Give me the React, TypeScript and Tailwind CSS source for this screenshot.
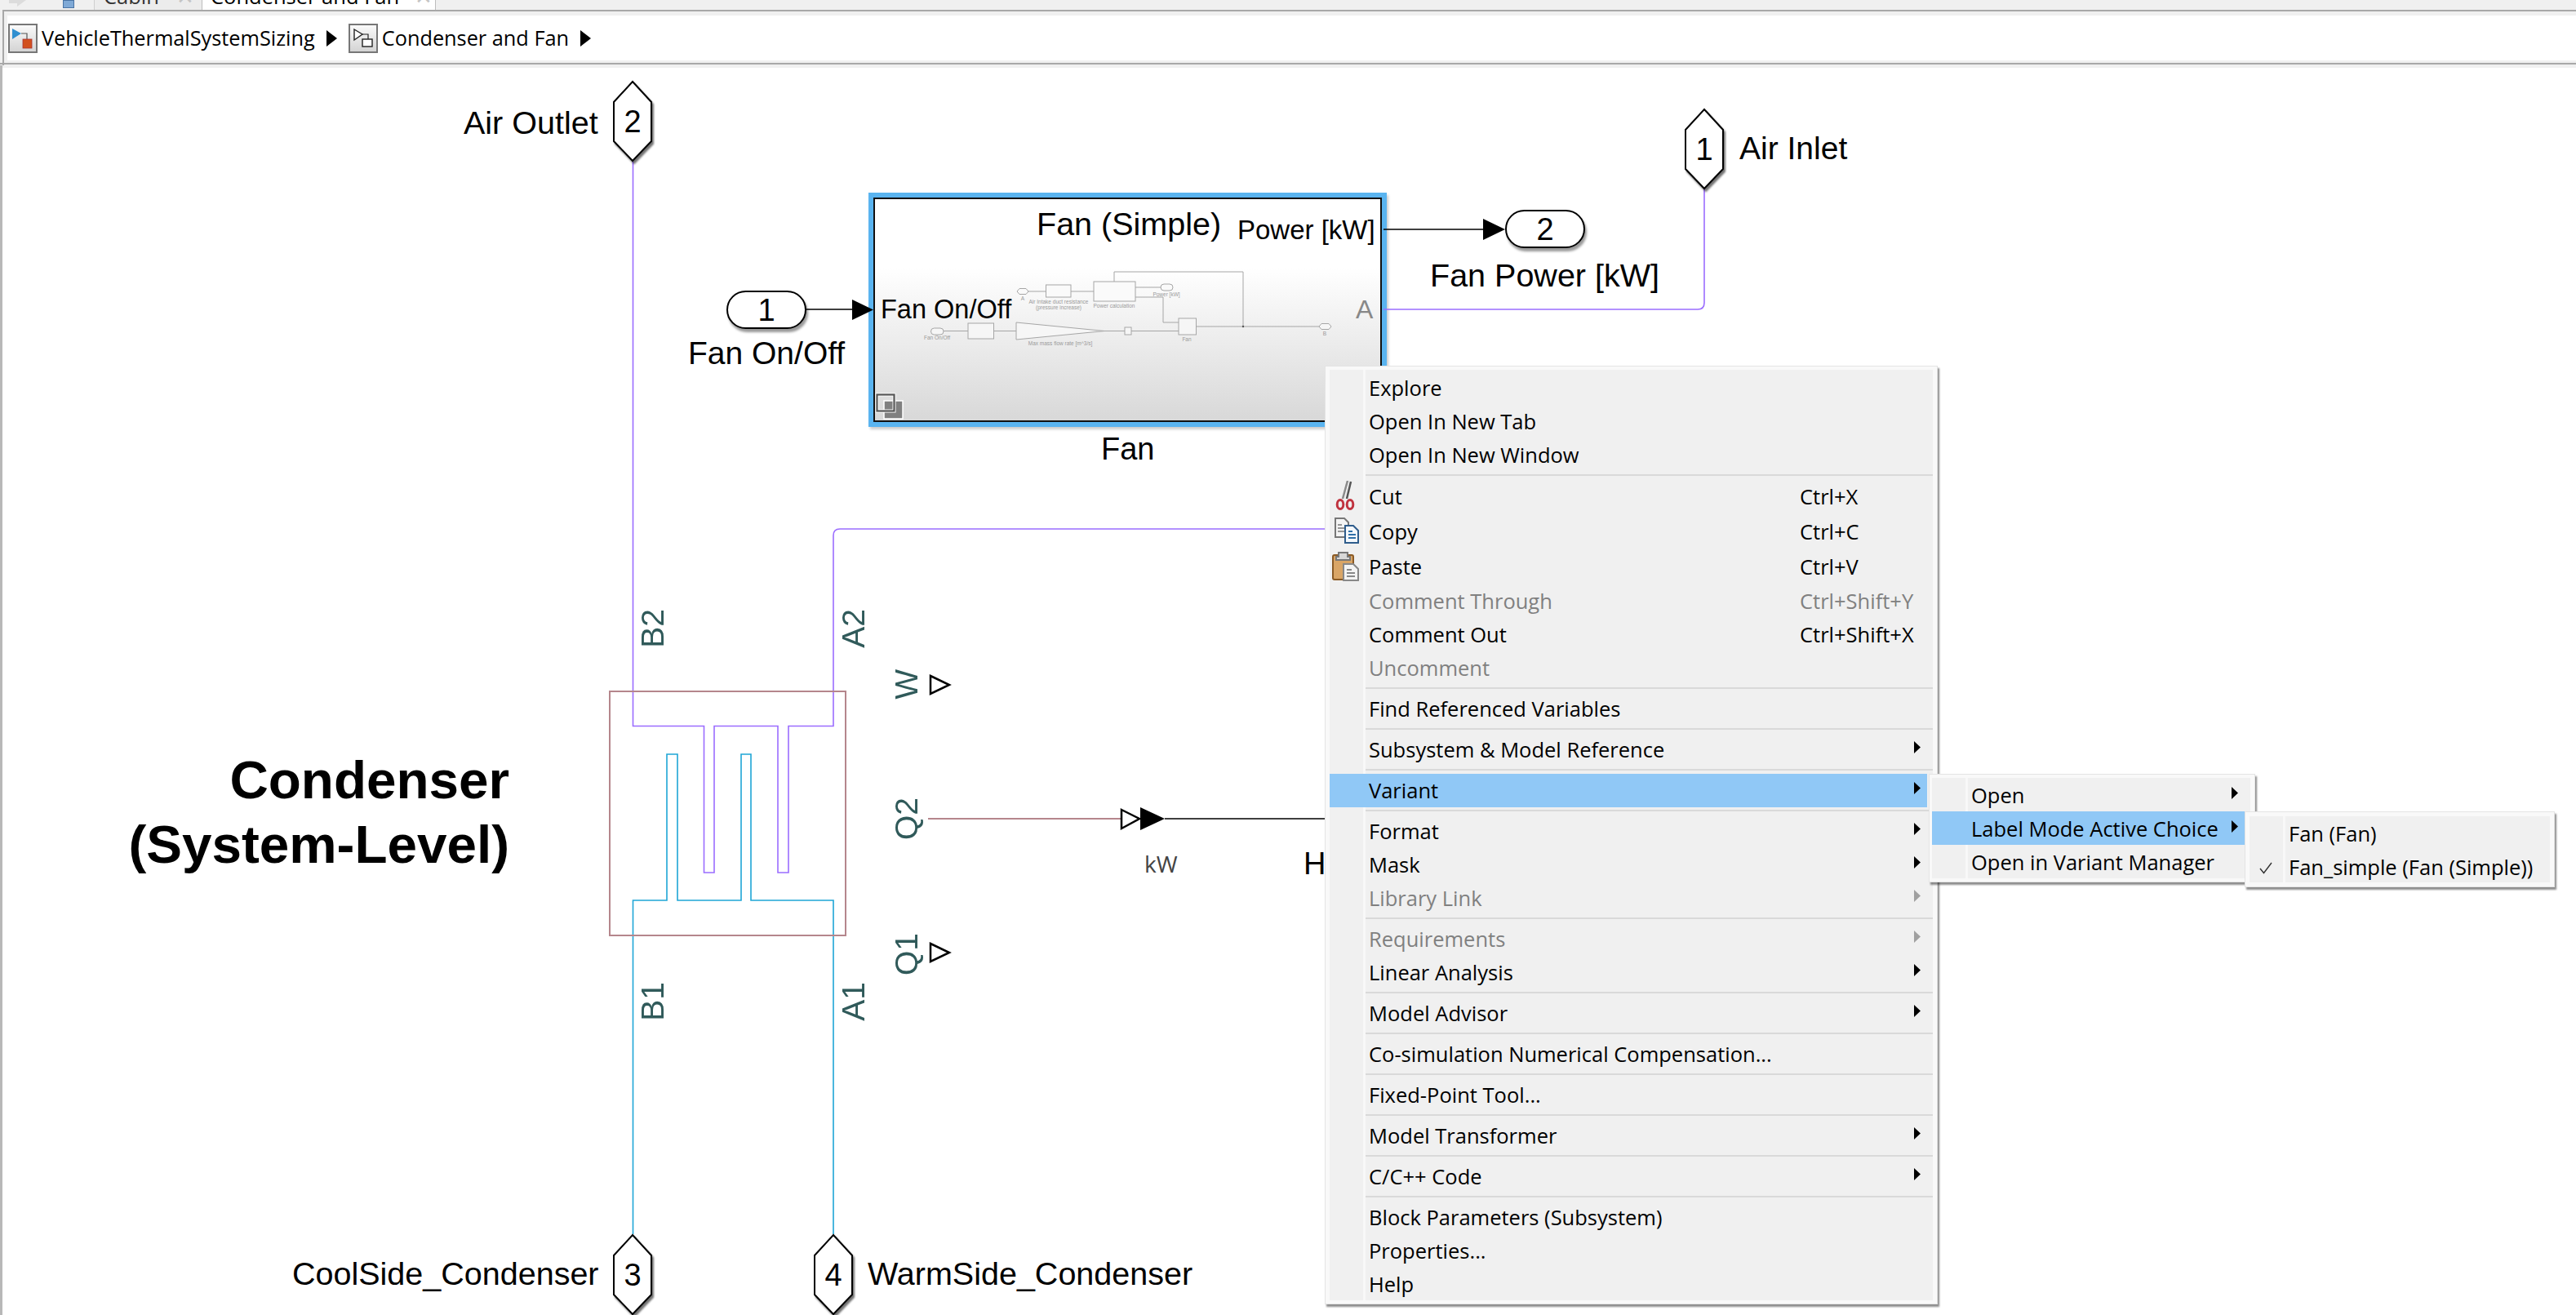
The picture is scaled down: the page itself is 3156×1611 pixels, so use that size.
import type { ReactNode } from 'react';

const uiFont = "font-['Open_Sans','Noto_Sans',sans-serif]";
const blockFont = "font-['Liberation_Sans',Arial,sans-serif]";

const Arrow = ({ gray }: { gray?: boolean }) => (
  <svg width="8" height="15" viewBox="0 0 8 15" className="shrink-0 -mt-[5px]">
    <path d="M0 0 L8 7.5 L0 15 Z" fill={gray ? '#a0a0a0' : '#000'} />
  </svg>
);

const CutIcon = () => (
  <svg width="24" height="36" viewBox="0 0 24 36" className="absolute left-[7px] top-[2px]">
    <path d="M15 0 L9 22" stroke="#8a8a8a" strokeWidth="2.5" fill="none" />
    <path d="M19 1 L14 22" stroke="#555" strokeWidth="2.5" fill="none" />
    <ellipse cx="6" cy="29" rx="3.8" ry="5.5" fill="none" stroke="#c0333f" strokeWidth="3" />
    <ellipse cx="18" cy="29" rx="3.8" ry="5.5" fill="none" stroke="#c0333f" strokeWidth="3" />
  </svg>
);

const CopyIcon = () => (
  <svg width="30" height="32" viewBox="0 0 30 32" className="absolute left-[6px] top-[4px]">
    <path d="M1 1 H12 L17 6 V24 H1 Z" fill="#f4f4f4" stroke="#777" strokeWidth="2" />
    <path d="M4 9 H9 M4 13 H13 M4 17 H13" stroke="#777" strokeWidth="1.5" />
    <path d="M13 10 H23 L29 16 V31 H13 Z" fill="#f4f8fc" stroke="#2f5d8c" strokeWidth="2" />
    <path d="M17 17 H22 M17 21 H26 M17 25 H26" stroke="#2f6fa8" strokeWidth="2" />
  </svg>
);

const PasteIcon = () => (
  <svg width="33" height="37" viewBox="0 0 33 37" className="absolute left-[3px] top-[2px]">
    <rect x="1" y="5" width="25" height="30" rx="2" fill="#d9a566" stroke="#8a5a25" strokeWidth="2" />
    <path d="M8 7 V2 H19 V7 H22 V11 H5 V7 Z" fill="#d8d8d8" stroke="#777" strokeWidth="2" />
    <path d="M14 16 H26 L32 22 V36 H14 Z" fill="#f4f4f4" stroke="#888" strokeWidth="2" />
    <path d="M18 23 H24 M18 27 H28 M18 31 H28" stroke="#888" strokeWidth="2" />
  </svg>
);

const CheckIcon = () => (
  <svg width="16" height="15" viewBox="0 0 16 15" className="absolute left-[12px] top-[15px]">
    <path d="M1 8 L5.5 13.5 L15 1" fill="none" stroke="#333" strokeWidth="1.4" />
  </svg>
);

type RowProps = {
  label: string;
  shortcut?: string;
  arrow?: boolean;
  disabled?: boolean;
  selected?: boolean;
  tall?: boolean;
  icon?: ReactNode;
};

const Row = ({ label, shortcut, arrow, disabled, selected, tall, icon }: RowProps) => (
  <div
    className={`relative flex items-center ${tall ? 'h-[43px]' : 'h-[41px]'} ${selected ? 'bg-[#90c8f6] mr-[7px]' : ''} ${disabled ? 'text-[#808080]' : 'text-black'}`}
  >
    <div className="w-[48px] shrink-0">{icon}</div>
    <span className="flex-1 whitespace-nowrap pt-[2px]">{label}</span>
    {shortcut && <span className="w-[163px] shrink-0 whitespace-nowrap pt-[2px]">{shortcut}</span>}
    {arrow && (
      <div className={selected ? 'mr-[8px]' : 'mr-[15px]'}>
        <Arrow gray={disabled} />
      </div>
    )}
  </div>
);

const Sep = () => (
  <div className="h-[9px] pl-[44px] pt-[3px]">
    <div className="h-[2px] bg-[#d9d9d9]" />
  </div>
);

const Panel = ({ children }: { children: ReactNode }) => (
  <div className="relative h-full bg-[#f0f0f0]">
    <div className="absolute left-[41px] top-0 bottom-0 w-[3px] bg-[#f8f8f8]" />
    {children}
  </div>
);

const menuShell = `absolute ${uiFont} text-[25.5px] leading-none bg-[#f9f9f9] border border-[#e4e4e4] shadow-[2px_3px_2px_rgba(0,0,0,0.45)]`;

const Hex = ({ n, className }: { n: string; className: string }) => (
  <div className={`absolute w-[48px] h-[99px] flex items-center justify-center ${className}`}>
    <svg viewBox="0 0 48 99" className="absolute inset-0 w-full h-full overflow-visible drop-shadow-[2px_3px_1px_rgba(0,0,0,0.55)]">
      <path d="M24 1 L47 26 V74 L24 98 L1 74 V26 Z" fill="#fff" stroke="#000" strokeWidth="2" />
    </svg>
    <span className="relative text-[38px] leading-none text-black">{n}</span>
  </div>
);

const Pill = ({ n, className }: { n: string; className: string }) => (
  <div
    className={`absolute w-[98px] h-[47px] rounded-[24px] border-2 border-black bg-white flex items-center justify-center text-[38px] leading-none shadow-[2px_4px_3px_rgba(0,0,0,0.4)] ${className}`}
  >
    {n}
  </div>
);

const Label = ({ text, className }: { text: string; className: string }) => (
  <div className={`absolute whitespace-nowrap leading-[40px] text-black ${className}`}>{text}</div>
);

const PortName = ({ text, className }: { text: string; className: string }) => (
  <div className={`absolute [writing-mode:vertical-rl] rotate-180 whitespace-nowrap text-[39px] leading-[30px] w-[30px] text-[#305a5a] ${className}`}>
    {text}
  </div>
);

const Wires = () => (
  <svg viewBox="0 80 3156 1531" className="absolute inset-0 w-full h-full pointer-events-none">
    {/* physical wires */}
    <g fill="none" stroke="#9b6dff" strokeWidth="1.6">
      <path d="M775.5 198 V889.5 H862.5 V1069 H875 V889.5 H953 V1069 H966 V889.5 H1021 V656 Q1021 648 1029 648 H1623" />
      <path d="M1695 379 H2080 Q2088 379 2088 371 V232" />
    </g>
    <path
      d="M775.5 1512 V1103 H817 V924 H830 V1103 H908 V924 H920 V1103 H1021 V1512"
      fill="none"
      stroke="#1fa6d6"
      strokeWidth="1.6"
    />
    <rect x="747" y="847" width="289" height="299" fill="none" stroke="#b5868c" strokeWidth="2" />
    <path d="M1137 1003 H1373" stroke="#b5868c" strokeWidth="2" />

    {/* signal lines and arrow heads */}
    <path d="M988 379 H1045 M1695 281 H1817 M1427 1003 H1623" stroke="#000" strokeWidth="1.6" fill="none" />
    <path d="M1044 367 L1070 379.5 L1044 392 Z M1817 268 L1844 281 L1817 294 Z M1397 989 L1427 1003 L1397 1017 Z" fill="#000" />
    <g fill="#fff" stroke="#000" strokeWidth="2.5">
      <path d="M1374 992 L1396 1003 L1374 1015 Z" />
      <path d="M1140 828 L1163 839 L1140 850 Z" />
      <path d="M1140 1156 L1163 1167 L1140 1178 Z" />
    </g>

    {/* fan subsystem thumbnail */}
    <g fill="none" stroke="#a6a6a6" strokeWidth="1">
      <path d="M1260 357 H1281.5 M1312 357 H1340" strokeWidth="2" stroke="#cfcfcf" />
      <path d="M1365 345 V333 H1523 V400" />
      <path d="M1391 352 H1422" />
      <path d="M1391 364 H1425 V395 H1444" />
      <path d="M1465.5 400 H1616" />
      <path d="M1156 405.5 H1186 M1217.5 405.5 H1245 M1353 405.5 H1378 M1386 405.5 H1444" />
      <rect x="1281.5" y="349" width="30.5" height="15" fill="#fafafa" />
      <rect x="1340" y="345" width="51" height="24" fill="#fafafa" />
      <rect x="1444" y="390" width="21.5" height="20" fill="#f6f6f6" />
      <rect x="1186" y="396" width="31.5" height="19" fill="#f6f6f6" />
      <rect x="1378" y="401" width="8" height="9" fill="#f6f6f6" />
      <path d="M1245 395 L1353 405.5 L1245 416 Z" fill="#f6f6f6" />
      <path d="M1246 357 L1249 353.5 H1257 L1260 357 L1257 360.5 H1249 Z" fill="#fafafa" />
      <path d="M1616 400 L1619 396.5 H1628 L1631 400 L1628 403.5 H1619 Z" fill="#f6f6f6" />
      <rect x="1422" y="348" width="15" height="8" rx="4" fill="#fafafa" />
      <rect x="1140.5" y="402" width="15.5" height="8" rx="4" fill="#f6f6f6" />
    </g>
    <circle cx="1523" cy="400" r="1.2" fill="#555" />
    <g fill="#9a9a9a" fontSize="6.5" textAnchor="middle" fontFamily="Liberation Sans">
      <text x="1253" y="368">A</text>
      <text x="1297" y="372">Air Intake duct resistance</text>
      <text x="1297" y="379">(pressure increase)</text>
      <text x="1365" y="377">Power calculation</text>
      <text x="1429" y="363">Power [kW]</text>
      <text x="1148" y="416">Fan On/Off</text>
      <text x="1299" y="423">Max mass flow rate [m^3/s]</text>
      <text x="1454" y="418">Fan</text>
      <text x="1623" y="411">B</text>
    </g>

    {/* subsystem badge */}
    <rect x="1083" y="491" width="23" height="22" fill="#808080" stroke="#fff" strokeWidth="1.5" />
    <rect x="1074.5" y="483.5" width="21" height="20" fill="none" stroke="#fff" strokeWidth="4" />
    <rect x="1074.5" y="483.5" width="21" height="20" fill="none" stroke="#555" strokeWidth="2.2" />
  </svg>
);

const BreadcrumbIcon = ({ children }: { children: ReactNode }) => (
  <div className="w-[36px] h-[36px] shrink-0 border-2 border-[#777] bg-gradient-to-b from-[#fafafa] to-[#d4d4d4]">
    <svg viewBox="0 0 32 32" className="w-full h-full">
      {children}
    </svg>
  </div>
);

const CrumbArrow = () => (
  <svg width="13" height="20" viewBox="0 0 13 20" className="shrink-0 mx-[14px]">
    <path d="M0 0 L13 10 L0 20 Z" fill="#000" />
  </svg>
);

export default function App() {
  return (
    <div className={`w-[3156px] h-[1611px] overflow-hidden flex flex-col bg-[#f0f0f0] ${blockFont}`}>
      {/* tab strip, cut by the top of the shot */}
      <div className={`h-[12px] shrink-0 flex overflow-hidden ${uiFont} text-[25.5px] leading-none`}>
        <div className="w-[115px] flex items-start pl-[11px] gap-[45px]">
          <svg width="21" height="8" viewBox="0 0 21 8" className="shrink-0">
            <path d="M0 0 H21 L10 8 V4 H0 Z" fill="#dcdcdc" />
          </svg>
          <div className="w-[14px] h-[10px] bg-[#7fa9d6] border border-[#4a74a5]" />
        </div>
        <div className="w-[132px] bg-[#ececec] border-l border-[#cfcfcf] pl-[11px] flex gap-[21px]">
          <span className="-mt-[17px] text-[#333]">Cabin</span>
          <span className="-mt-[17px] text-[#c4c4c4]">✕</span>
        </div>
        <div className="w-[287px] bg-white border-x border-[#bdbdbd] pl-[10px] flex gap-[19px]">
          <span className="-mt-[17px] whitespace-nowrap text-black">Condenser and Fan</span>
          <span className="-mt-[17px] text-[#c4c4c4]">✕</span>
        </div>
      </div>

      {/* breadcrumb bar */}
      <div className="h-[68px] shrink-0 ml-[3px] border-t-2 border-l-2 border-[#a8a8a8] pl-[4px] pt-[5px] pb-[6px]">
        <div className={`h-[55px] bg-white flex items-center pl-[1px] ${uiFont} text-[25.3px] text-black`}>
          <BreadcrumbIcon>
            <path d="M3 4 L14 10 L3 17 Z" fill="#2f8fd0" />
            <path d="M14 10 H21 V17" fill="none" stroke="#555" strokeWidth="1.2" />
            <rect x="16" y="17" width="11" height="11" fill="#d2501e" stroke="#a33" strokeWidth="0.8" />
          </BreadcrumbIcon>
          <span className="ml-[5px] whitespace-nowrap">VehicleThermalSystemSizing</span>
          <CrumbArrow />
          <BreadcrumbIcon>
            <path d="M5 5 L15 11 L5 18 Z" fill="#fff" stroke="#222" strokeWidth="1.4" />
            <path d="M15 11 H22 V17" fill="none" stroke="#222" strokeWidth="1.2" />
            <rect x="15" y="17" width="12" height="9" fill="#fff" stroke="#222" strokeWidth="1.4" />
          </BreadcrumbIcon>
          <span className="ml-[5px] whitespace-nowrap">Condenser and Fan</span>
          <CrumbArrow />
        </div>
      </div>

      {/* block diagram canvas, all positions relative to y=80 */}
      <div className="relative flex-1 bg-white shadow-[inset_3px_0_0_#b8b8b8,inset_0_3px_0_#f0f0f0]">
        <div className="absolute left-0 -top-[3px] w-full h-[2px] bg-[#a8a8a8]" />

        {/* fan block */}
        <div className="absolute left-[1064px] top-[156px] w-[635px] h-[287px] border-[6px] border-[#5ab4f0] shadow-[2px_3px_3px_rgba(0,0,0,0.2)]">
          <div className="w-full h-full border-2 border-[#111] bg-[linear-gradient(to_bottom,#fff_0%,#fff_31%,#d8d8d8_100%)]" />
        </div>

        <Wires />

        <Label text="Air Outlet" className="left-[568px] top-[50px] text-[39.5px]" />
        <Hex n="2" className="left-[751px] top-[19px]" />
        <Hex n="1" className="left-[2064px] top-[53px]" />
        <Label text="Air Inlet" className="left-[2131px] top-[82px] text-[39px]" />

        <Pill n="1" className="left-[890px] top-[276px]" />
        <Label text="Fan On/Off" className="left-[843px] top-[333px] text-[39px]" />
        <Label text="Fan (Simple)" className="left-[1270px] top-[174px] text-[39.5px]" />
        <Label text="Power [kW]" className="left-[1516px] top-[182px] text-[33px]" />
        <Label text="Fan On/Off" className="left-[1079px] top-[279px] text-[32.5px]" />
        <Label text="A" className="left-[1661px] top-[279px] text-[32px] !text-[#888]" />
        <Label text="Fan" className="left-[1349px] top-[450px] text-[38px]" />
        <Pill n="2" className="left-[1844px] top-[177px]" />
        <Label text="Fan Power [kW]" className="left-[1752px] top-[237px] text-[39.5px]" />

        <div className="absolute right-[2532px] top-[836px] text-right text-[65.6px] leading-[79px] font-bold text-black whitespace-nowrap">
          Condenser
          <br />
          (System-Level)
        </div>

        <PortName text="B2" className="left-[785px] top-[666px]" />
        <PortName text="A2" className="left-[1031px] top-[666px]" />
        <PortName text="W" className="left-[1096px] top-[740px]" />
        <PortName text="Q2" className="left-[1096px] top-[897px]" />
        <PortName text="Q1" className="left-[1096px] top-[1063px]" />
        <PortName text="B1" className="left-[785px] top-[1123px]" />
        <PortName text="A1" className="left-[1031px] top-[1123px]" />

        <div className={`absolute left-[1402px] top-[960px] ${uiFont} text-[28px] leading-[36px] text-[#444]`}>kW</div>
        <Label text="H" className="left-[1597px] top-[958px] text-[38px]" />

        <Label text="CoolSide_Condenser" className="left-[358px] top-[1460px] text-[39.5px]" />
        <Hex n="3" className="left-[751px] top-[1432px]" />
        <Hex n="4" className="left-[997px] top-[1432px]" />
        <Label text="WarmSide_Condenser" className="left-[1063px] top-[1460px] text-[39.5px]" />

        {/* context menu */}
        <div className={`${menuShell} z-10 left-[1623px] top-[368px] w-[751px] h-[1150px] pt-[4px] pb-[4px] px-[5px]`}>
          <Panel>
            <div className="relative pt-[1.5px]">
              <Row label="Explore" />
              <Row label="Open In New Tab" />
              <Row label="Open In New Window" />
              <Sep />
              <Row label="Cut" shortcut="Ctrl+X" tall icon={<CutIcon />} />
              <Row label="Copy" shortcut="Ctrl+C" tall icon={<CopyIcon />} />
              <Row label="Paste" shortcut="Ctrl+V" tall icon={<PasteIcon />} />
              <Row label="Comment Through" shortcut="Ctrl+Shift+Y" disabled />
              <Row label="Comment Out" shortcut="Ctrl+Shift+X" />
              <Row label="Uncomment" disabled />
              <Sep />
              <Row label="Find Referenced Variables" />
              <Sep />
              <Row label="Subsystem & Model Reference" arrow />
              <Sep />
              <Row label="Variant" arrow selected />
              <Sep />
              <Row label="Format" arrow />
              <Row label="Mask" arrow />
              <Row label="Library Link" arrow disabled />
              <Sep />
              <Row label="Requirements" arrow disabled />
              <Row label="Linear Analysis" arrow />
              <Sep />
              <Row label="Model Advisor" arrow />
              <Sep />
              <Row label="Co-simulation Numerical Compensation..." />
              <Sep />
              <Row label="Fixed-Point Tool..." />
              <Sep />
              <Row label="Model Transformer" arrow />
              <Sep />
              <Row label="C/C++ Code" arrow />
              <Sep />
              <Row label="Block Parameters (Subsystem)" />
              <Row label="Properties..." />
              <Row label="Help" />
            </div>
          </Panel>
        </div>

        {/* Variant submenu */}
        <div className={`${menuShell} z-20 left-[2363px] top-[868px] w-[400px] h-[133px] pt-[4px] pb-[4px] pl-[3px] pr-[5px]`}>
          <Panel>
            <div className="relative">
              <Row label="Open" arrow />
              <Row label="Label Mode Active Choice" arrow selected />
              <Row label="Open in Variant Manager" />
            </div>
          </Panel>
        </div>

        {/* active choice submenu */}
        <div className={`${menuShell} z-30 left-[2750px] top-[914px] w-[380px] h-[93px] pt-[5px] pb-[5px] px-[5px]`}>
          <Panel>
            <div className="relative">
              <Row label="Fan (Fan)" />
              <Row label="Fan_simple (Fan (Simple))" icon={<CheckIcon />} />
            </div>
          </Panel>
        </div>
      </div>
    </div>
  );
}
